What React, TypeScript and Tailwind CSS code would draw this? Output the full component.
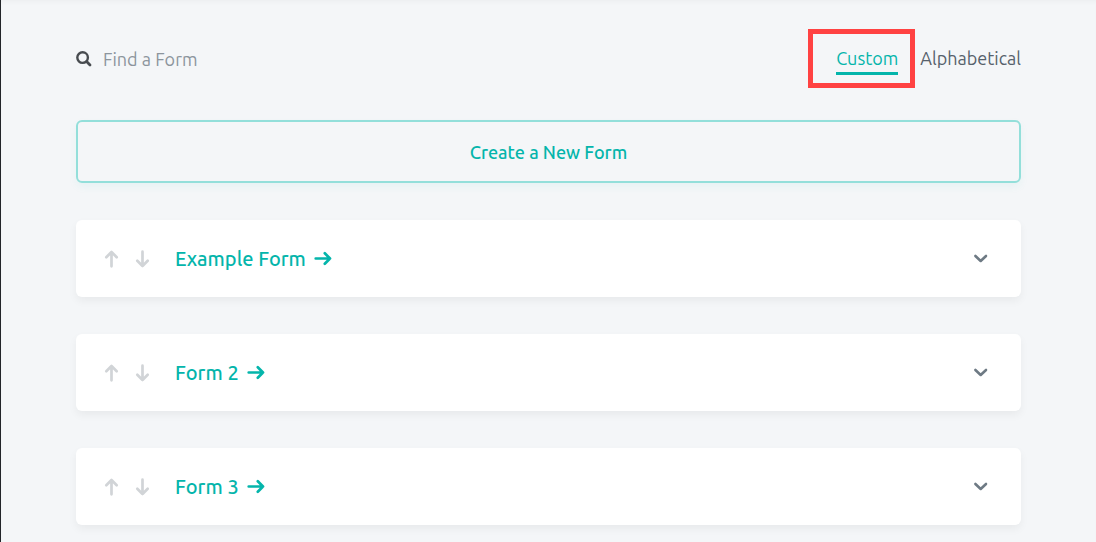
import { useState } from "react";

type Order = "custom" | "alphabetical";

const initialForms = ["Example Form", "Form 2", "Form 3"];

function ArrowIcon({ className }: { className: string }) {
  return (
    <svg
      viewBox="0 0 18 18"
      className={className}
      fill="none"
      stroke="currentColor"
      strokeLinecap="round"
      strokeLinejoin="round"
      strokeWidth="2.7"
      aria-hidden="true"
    >
      <path d="M1.7 8.5H16M10.8 3.3L16 8.5l-5.2 5.2" />
    </svg>
  );
}

function SearchIcon() {
  return (
    <svg
      viewBox="0 0 16 16"
      className="size-4 shrink-0 text-[#484c50]"
      fill="none"
      stroke="currentColor"
      aria-hidden="true"
    >
      <circle cx="6.6" cy="6.6" r="5.3" strokeWidth="2.4" />
      <path d="M10.6 10.6l3.4 3.4" strokeWidth="2.8" strokeLinecap="round" />
    </svg>
  );
}

function ChevronIcon() {
  return (
    <svg
      viewBox="0 0 16 16"
      className="size-4"
      fill="none"
      stroke="currentColor"
      strokeWidth="2.6"
      strokeLinecap="round"
      strokeLinejoin="round"
      aria-hidden="true"
    >
      <path d="M2.4 5L7.7 10l5.3-5" />
    </svg>
  );
}

function FormCard({
  name,
  onMove,
}: {
  name: string;
  onMove: (step: number) => void;
}) {
  return (
    <li className="flex h-[77px] items-center rounded-md bg-white pr-8 pl-[27px] shadow-[0_4px_8px_rgba(0,0,0,0.05)]">
      <div className="flex gap-3 text-[#d1d4d7]">
        <button
          type="button"
          aria-label={`Move ${name} up`}
          onClick={() => onMove(-1)}
        >
          <ArrowIcon className="size-[18px] -rotate-90" />
        </button>
        <button
          type="button"
          aria-label={`Move ${name} down`}
          onClick={() => onMove(1)}
        >
          <ArrowIcon className="size-[18px] rotate-90" />
        </button>
      </div>
      <a
        href="#"
        className="ml-6 flex items-center gap-2 text-xl font-medium text-[#04b5ab]"
      >
        {name}
        <ArrowIcon className="size-[18px]" />
      </a>
      <button
        type="button"
        aria-label={`Show details of ${name}`}
        className="ml-auto text-[#6e7a84]"
      >
        <ChevronIcon />
      </button>
    </li>
  );
}

export default function App() {
  const [order, setOrder] = useState<Order>("custom");
  const [forms, setForms] = useState(initialForms);
  const [query, setQuery] = useState("");

  const move = (name: string, step: number) => {
    const from = forms.indexOf(name);
    const to = from + step;
    if (to < 0 || to >= forms.length) return;
    const next = [...forms];
    [next[from], next[to]] = [next[to], next[from]];
    setForms(next);
  };

  const ordered = order === "custom" ? forms : [...forms].sort();
  const shown = ordered.filter((name) =>
    name.toLowerCase().includes(query.toLowerCase()),
  );

  return (
    <main className="min-h-screen border-l border-[#222529] bg-[#f4f6f8] px-[75px] pt-11 pb-4 font-['Ubuntu','Noto_Sans',sans-serif] shadow-[inset_0_4px_4px_-2px_rgba(0,0,0,0.03)]">
      <div className="flex items-start justify-between">
        <label className="flex items-center gap-[11px] pt-px">
          <SearchIcon />
          <input
            type="text"
            aria-label="Find a Form"
            placeholder="Find a Form"
            value={query}
            onChange={(event) => setQuery(event.target.value)}
            className="h-7 w-60 bg-transparent text-lg text-[#4f5962] outline-none placeholder:text-[#8c959d]"
          />
        </label>
        <div className="flex items-start gap-[22px] text-lg leading-7">
          <div className="relative">
            <button
              type="button"
              aria-pressed={order === "custom"}
              onClick={() => setOrder("custom")}
              className="block border-b-3 border-[#04b5ab] text-[#04b5ab]"
            >
              Custom
            </button>
            <span className="pointer-events-none absolute -top-[15px] -right-[17px] -bottom-[13px] -left-7 border-5 border-[#ff4242]" />
          </div>
          <button
            type="button"
            aria-pressed={order === "alphabetical"}
            onClick={() => setOrder("alphabetical")}
            className="text-[#56616b]"
          >
            Alphabetical
          </button>
        </div>
      </div>
      <button
        type="button"
        className="mt-[45px] h-[63px] w-full rounded-md border-2 border-[#93dfda] text-lg font-medium text-[#04b5ab] shadow-[0_4px_8px_rgba(4,181,171,0.06)]"
      >
        Create a New Form
      </button>
      <ul className="mt-[37px] flex flex-col gap-[37px]">
        {shown.map((name) => (
          <FormCard
            key={name}
            name={name}
            onMove={(step) => move(name, step)}
          />
        ))}
      </ul>
    </main>
  );
}
